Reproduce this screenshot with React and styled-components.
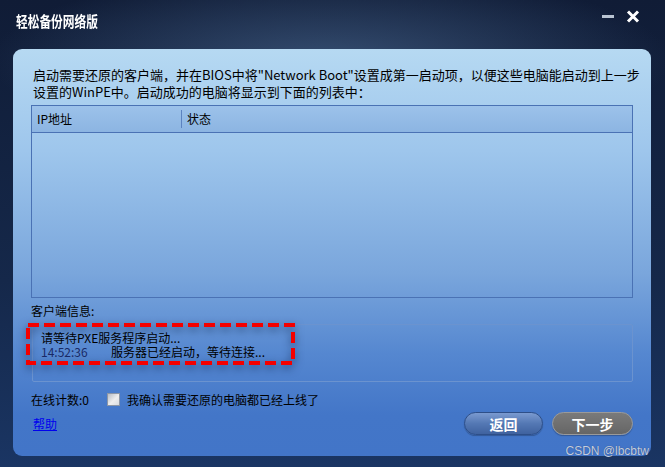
import styled, { createGlobalStyle } from "styled-components";

const Global = createGlobalStyle`
  html, body {
    margin: 0;
    padding: 0;
    background: #0e1a33;
  }
  body {
    font-family: "Noto Sans CJK SC", "Liberation Sans", sans-serif;
  }
`;

const Window = styled.div`
  position: relative;
  width: 665px;
  height: 467px;
  overflow: hidden;
  display: flex;
  flex-direction: column;
  background:
    radial-gradient(ellipse 340px 90px at 330px 60px, rgba(64, 92, 130, 0.75), rgba(64, 92, 130, 0) 100%),
    linear-gradient(180deg, #101c36 0%, #15284a 60%, #1a3563 100%);
`;

const TitleBar = styled.div`
  height: 49px;
  display: flex;
  align-items: flex-start;
  padding: 0 25px 0 16px;
  box-sizing: border-box;
`;

const Title = styled.div`
  margin-top: 11px;
  color: #fff;
  font-size: 15px;
  font-weight: bold;
  line-height: 19px;
  transform: scaleX(0.78);
  transform-origin: left center;
  white-space: nowrap;
`;

const Controls = styled.div`
  margin-left: auto;
  margin-top: 10px;
  display: flex;
  align-items: flex-start;
  gap: 12px;
`;

const Minimize = styled.div`
  width: 12px;
  height: 3px;
  margin-top: 5px;
  background: #b9c4d2;
`;

const Panel = styled.div`
  position: relative;
  margin: 0 14px 11px 13px;
  flex: 1;
  border-radius: 9px;
  padding: 17px 18px 21px;
  box-sizing: border-box;
  display: flex;
  flex-direction: column;
  background: linear-gradient(180deg, #b6d9f2 0%, #9ec6ec 25%, #7aa6dc 55%, #5587d0 75%, #4376c8 90%, #4275c8 100%);
  color: #000;
`;

const Desc = styled.div`
  font-size: 13px;
  line-height: 17px;
  margin-left: 2px;
  white-space: nowrap;
`;

const Table = styled.div`
  margin-top: 5px;
  height: 193px;
  border: 1px solid #4a72b4;
  box-sizing: border-box;
  display: flex;
  flex-direction: column;
`;

const HeadRow = styled.div`
  height: 26px;
  display: flex;
  align-items: center;
  border-bottom: 1px solid #4a72b4;
  background: linear-gradient(180deg, #9cc2ea 0%, #8cb5e2 100%);
  font-size: 12px;
`;

const HeadCell = styled.div`
  width: ${(p) => p.$w || "auto"};
  flex: ${(p) => (p.$w ? "none" : 1)};
  padding-left: 5px;
  box-sizing: border-box;
  border-right: ${(p) => (p.$w ? "1px solid #5c83c0" : "none")};
  line-height: 18px;
`;

const TableBody = styled.div`
  flex: 1;
`;

const Label = styled.div`
  margin-top: 6px;
  font-size: 12px;
  line-height: 14px;
`;

const InfoBox = styled.div`
  position: relative;
  margin: 6px 0 0 1px;
  height: 58px;
  border: 1px solid #6b93cf;
  border-radius: 2px;
  box-sizing: border-box;
  padding: 6px 0 0 8px;
  font-size: 12px;
  line-height: 14px;
`;

const InfoLine = styled.div`
  display: flex;
  white-space: nowrap;
`;

const Time = styled.span`
  width: 70px;
  color: #1a2a66;
`;

const Highlight = styled.svg`
  position: absolute;
  left: -7px;
  top: -2px;
  width: 269px;
  height: 42px;
  overflow: visible;
  filter: drop-shadow(0 3px 4px rgba(0, 20, 60, 0.6));
  pointer-events: none;
`;

const OnlineRow = styled.div`
  margin-top: 9px;
  display: flex;
  align-items: center;
  height: 16px;
  font-size: 12px;
`;

const Count = styled.span`
  width: 76px;
`;

const Check = styled.span`
  width: 13px;
  height: 13px;
  box-sizing: border-box;
  border: 1px solid #8c96a6;
  background: linear-gradient(135deg, #b9bdc5 0%, #eeeeee 55%, #d8dbe0 100%);
  margin-right: 7px;
`;

const Footer = styled.div`
  margin-top: 5px;
  display: flex;
  align-items: center;
  height: 23px;
`;

const Help = styled.a`
  margin-left: 2px;
  color: #0000ee;
  font-size: 12px;
  text-decoration: underline;
`;

const Button = styled.div`
  width: ${(p) => p.$w}px;
  height: 23px;
  border-radius: 12px;
  box-sizing: border-box;
  display: flex;
  align-items: center;
  justify-content: center;
  color: #fff;
  font-size: 14px;
  font-weight: bold;
  margin-left: ${(p) => p.$ml || "0"};
  border: 1px solid ${(p) => (p.$gray ? "#9a9a9a" : "#2e4f88")};
  background: ${(p) =>
    p.$gray
      ? "linear-gradient(180deg, #7a7a7a 0%, #666 100%)"
      : "linear-gradient(180deg, #7a9ad0 0%, #5478b4 50%, #3f629f 100%)"};
  box-shadow: 0 1px 1px rgba(0, 0, 0, 0.25);
`;

const Watermark = styled.div`
  position: absolute;
  right: 16px;
  bottom: 9px;
  font-family: "Liberation Sans", sans-serif;
  font-size: 12px;
  color: #c3cde0;
  text-shadow: 0 0 1px rgba(0, 0, 0, 0.4);
`;

export default function App() {
  return (
    <Window>
      <Global />
      <TitleBar>
        <Title>轻松备份网络版</Title>
        <Controls>
          <Minimize />
          <svg width="14" height="13" viewBox="0 0 14 13">
            <path d="M2 1.5 L12 11.5 M12 1.5 L2 11.5" stroke="#fff" strokeWidth="3" />
          </svg>
        </Controls>
      </TitleBar>
      <Panel>
        <Desc>
          启动需要还原的客户端，并在BIOS中将"Network Boot"设置成第一启动项，以便这些电脑能启动到上一步
          <br />
          设置的WinPE中。启动成功的电脑将显示到下面的列表中：
        </Desc>
        <Table>
          <HeadRow>
            <HeadCell $w="150px">IP地址</HeadCell>
            <HeadCell>状态</HeadCell>
          </HeadRow>
          <TableBody />
        </Table>
        <Label>客户端信息:</Label>
        <InfoBox>
          <InfoLine>请等待PXE服务程序启动...</InfoLine>
          <InfoLine>
            <Time>14:52:36</Time>
            服务器已经启动，等待连接...
          </InfoLine>
          <Highlight viewBox="0 0 269 42">
            <rect x="2" y="2" width="265" height="38" fill="none" stroke="#f40000" strokeWidth="4" strokeDasharray="11 5" />
          </Highlight>
        </InfoBox>
        <OnlineRow>
          <Count>在线计数:0</Count>
          <Check />
          我确认需要还原的电脑都已经上线了
        </OnlineRow>
        <Footer>
          <Help href="#">帮助</Help>
          <Button $w={79} $ml="auto">返回</Button>
          <Button $w={81} $gray $ml="9px">下一步</Button>
        </Footer>
      </Panel>
      <Watermark>CSDN @lbcbtw</Watermark>
    </Window>
  );
}
